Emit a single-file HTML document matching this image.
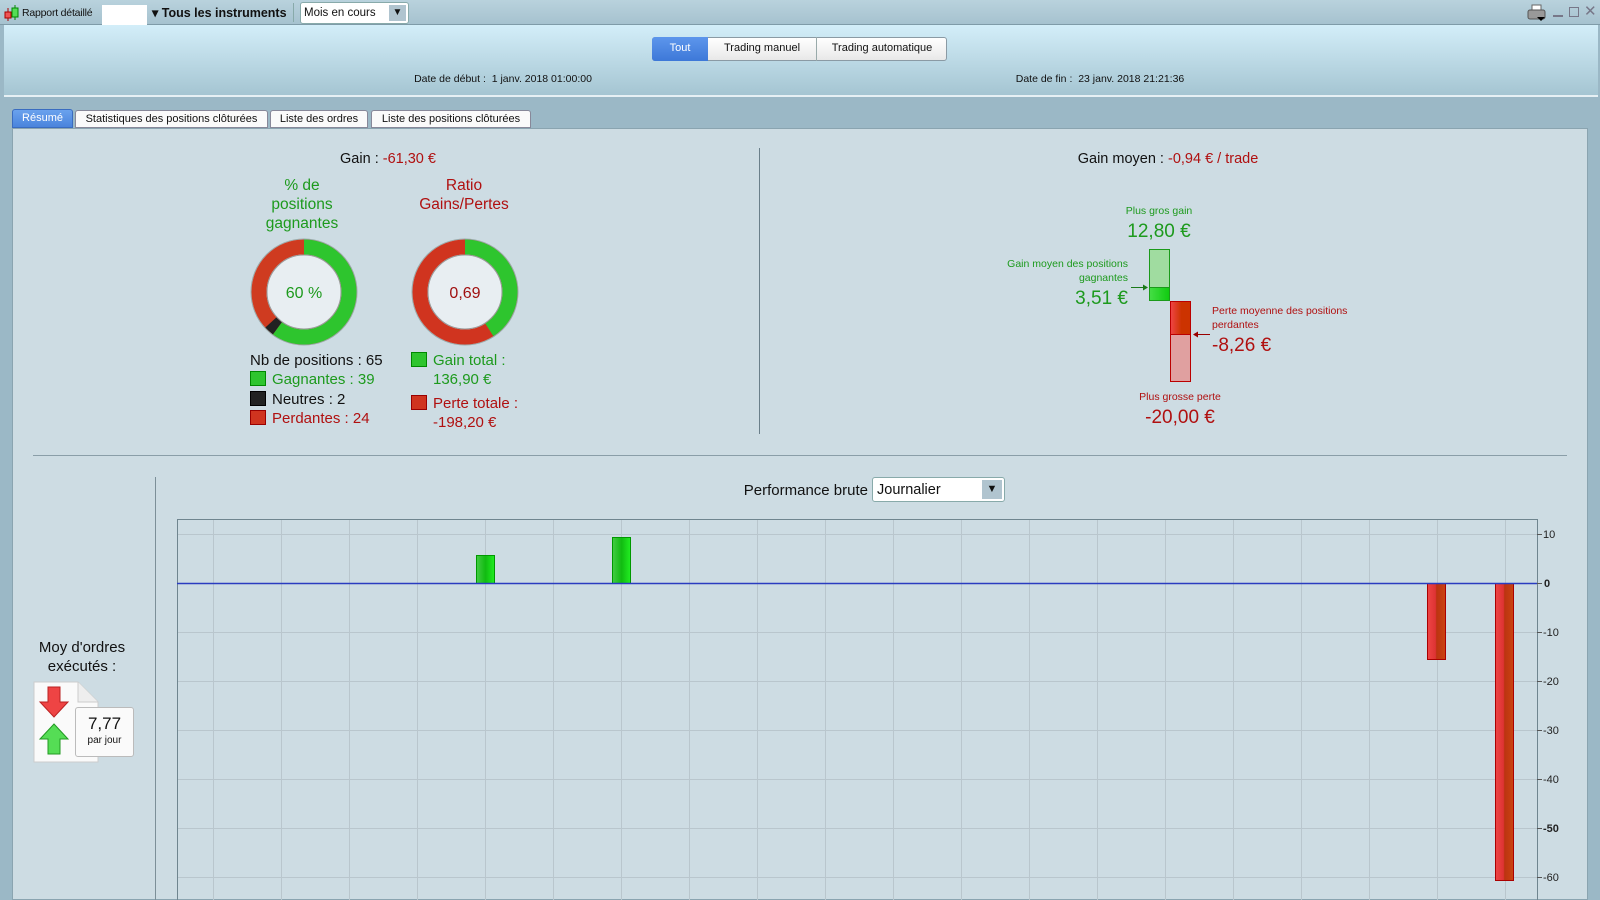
<!DOCTYPE html>
<html><head><meta charset="utf-8">
<style>
*{margin:0;padding:0;box-sizing:border-box}
body{width:1600px;height:900px;overflow:hidden;background:#9bb8c6;font-family:"Liberation Sans",sans-serif;position:relative;color:#111}
.a{position:absolute;white-space:nowrap}
.g{color:#1d9a1d}.r{color:#b01010}
.c{transform:translateX(-50%);text-align:center}
</style></head><body>
<!-- top bar -->
<div class="a" style="left:0;top:0;width:1600px;height:25px;background:linear-gradient(#b9d2dd,#a6c2cf);border-bottom:1px solid #7f9ba8"></div>
<svg class="a" style="left:3px;top:4px" width="18" height="18"><line x1="5" y1="4" x2="5" y2="17" stroke="#a00"/><rect x="2" y="8" width="6" height="6" fill="#e55" stroke="#a00"/><line x1="12" y1="1" x2="12" y2="16" stroke="#080"/><rect x="9" y="4" width="6" height="9" fill="#5d5" stroke="#080"/></svg>
<div class="a" style="left:22px;top:7px;font-size:10.5px;letter-spacing:-0.2px">Rapport détaillé</div>
<div class="a" style="left:102px;top:5px;width:45px;height:21px;background:#fff"></div>
<div class="a" style="left:152px;top:5px;font-size:12.5px;font-weight:bold">▾ Tous les instruments</div>
<div class="a" style="left:293px;top:3px;width:1px;height:19px;background:#8aa"></div>
<div class="a" style="left:300px;top:2px;width:109px;height:22px;background:#fff;border:1px solid #8aa;border-radius:3px;font-size:11.5px;padding:4px 0 0 3px">Mois en cours<div class="a" style="right:2px;top:2px;width:17px;height:16px;background:#b0c4cf;font-size:10px;text-align:center;line-height:16px">▼</div></div>
<svg class="a" style="left:1527px;top:4px" width="22" height="18"><rect x="5" y="1" width="9" height="6" fill="#fff" stroke="#666"/><rect x="1" y="6" width="17" height="9" rx="2" fill="#999" stroke="#555"/><path d="M10 13h8l-4 4z" fill="#000"/></svg>
<div class="a" style="left:1553px;top:15px;width:10px;height:2px;background:#778"></div>
<div class="a" style="left:1569px;top:7px;width:10px;height:10px;border:1.5px solid #778"></div>
<div class="a" style="left:1584px;top:2px;font-size:15px;color:#778">✕</div>
<!-- header -->
<div class="a" style="left:4px;top:25px;width:1594px;height:72px;background:linear-gradient(#d3eef9,#a5c5d2);border-bottom:2px solid #e6f0f4"></div>
<div class="a" style="left:652px;top:37px;width:295px;height:24px;border:1px solid #8a9aa4;border-radius:3px;background:linear-gradient(#fff,#e8e8e8);font-size:11px"></div>
<div class="a" style="left:652px;top:37px;width:56px;height:24px;background:linear-gradient(#5d96ec,#3d78d8);border-radius:3px 0 0 3px;color:#fff;font-size:11px;text-align:center;line-height:23px">Tout</div>
<div class="a" style="left:708px;top:37px;width:109px;height:24px;border-right:1px solid #9aa;font-size:11px;text-align:center;line-height:23px">Trading manuel</div>
<div class="a" style="left:817px;top:37px;width:130px;height:24px;font-size:11px;text-align:center;line-height:23px">Trading automatique</div>
<div class="a c" style="left:503px;top:73px;font-size:10.5px">Date de début :&nbsp; 1 janv. 2018 01:00:00</div>
<div class="a c" style="left:1100px;top:73px;font-size:10.5px">Date de fin :&nbsp; 23 janv. 2018 21:21:36</div>
<!-- tabs -->
<div class="a" style="left:12px;top:109px;width:61px;height:19px;background:linear-gradient(#6aa2ee,#4a84dc);border:1px solid #3a6cc0;border-radius:3px 3px 0 0;color:#fff;font-size:11px;text-align:center;line-height:17px">Résumé</div>
<div class="a" style="left:75px;top:110px;width:193px;height:18px;background:#fafafa;border:1px solid #889;border-radius:3px 3px 0 0;font-size:11px;text-align:center;line-height:16px">Statistiques des positions clôturées</div>
<div class="a" style="left:270px;top:110px;width:98px;height:18px;background:#fafafa;border:1px solid #889;border-radius:3px 3px 0 0;font-size:11px;text-align:center;line-height:16px">Liste des ordres</div>
<div class="a" style="left:371px;top:110px;width:160px;height:18px;background:#fafafa;border:1px solid #889;border-radius:3px 3px 0 0;font-size:11px;text-align:center;line-height:16px">Liste des positions clôturées</div>
<!-- panel -->
<div class="a" style="left:12px;top:128px;width:1576px;height:772px;background:#cddce3;border:1px solid #8aa4b0"></div>
<div class="a c" style="left:388px;top:151px;font-size:14.5px">Gain : <span class="r">-61,30 €</span></div>
<div class="a c g" style="left:302px;top:176px;font-size:15.5px;line-height:19px">% de<br>positions<br>gagnantes</div>
<div class="a c r" style="left:464px;top:176px;font-size:15.5px;line-height:19px">Ratio<br>Gains/Pertes</div>
<svg class="a" style="left:250px;top:238px" width="110" height="110">
<circle cx="54" cy="54" r="53" fill="#dfe6ea" stroke="#9aa" />
<circle cx="54" cy="54" r="45" fill="none" stroke="#cf3b20" stroke-width="15"/>
<circle cx="54" cy="54" r="45" fill="none" stroke="#2ec52e" stroke-width="15" stroke-dasharray="169.6 400" transform="rotate(-90 54 54)"/>
<circle cx="54" cy="54" r="45" fill="none" stroke="#222" stroke-width="15" stroke-dasharray="0 169.6 8.7 400" transform="rotate(-90 54 54)"/>
<circle cx="54" cy="54" r="37" fill="#e8eef2" stroke="#999"/>
<text x="54" y="60" font-size="16" text-anchor="middle" fill="#1d9a1d" font-family="Liberation Sans">60 %</text></svg>
<svg class="a" style="left:411px;top:238px" width="110" height="110">
<circle cx="54" cy="54" r="53" fill="#dfe6ea" stroke="#9aa" />
<circle cx="54" cy="54" r="45" fill="none" stroke="#d0341f" stroke-width="15"/>
<circle cx="54" cy="54" r="45" fill="none" stroke="#2ec52e" stroke-width="15" stroke-dasharray="115.5 400" transform="rotate(-90 54 54)"/>
<circle cx="54" cy="54" r="37" fill="#e8eef2" stroke="#999"/>
<text x="54" y="60" font-size="16" text-anchor="middle" fill="#a01010" font-family="Liberation Sans">0,69</text></svg>
<div class="a" style="left:250px;top:351px;font-size:15px;line-height:19.4px">Nb de positions : 65<br>
<span style="display:inline-block;width:16px;height:15px;background:#2ec52e;border:1px solid #080;vertical-align:-2px;margin-right:6px"></span><span class="g">Gagnantes : 39</span><br>
<span style="display:inline-block;width:16px;height:15px;background:#222;border:1px solid #000;vertical-align:-2px;margin-right:6px"></span>Neutres : 2<br>
<span style="display:inline-block;width:16px;height:15px;background:#d0341f;border:1px solid #900;vertical-align:-2px;margin-right:6px"></span><span class="r">Perdantes : 24</span></div>
<div class="a" style="left:411px;top:352px;width:16px;height:15px;background:#2ec52e;border:1px solid #080"></div>
<div class="a g" style="left:433px;top:351px;font-size:15px;line-height:19.4px">Gain total :<br>136,90 €</div>
<div class="a" style="left:411px;top:395px;width:16px;height:15px;background:#d0341f;border:1px solid #900"></div>
<div class="a r" style="left:433px;top:394px;font-size:15px;line-height:19.4px">Perte totale :<br>-198,20 €</div>
<div class="a" style="left:759px;top:148px;width:1px;height:286px;background:#6a7f8a"></div>
<div class="a c" style="left:1168px;top:151px;font-size:14.5px">Gain moyen : <span class="r">-0,94 € / trade</span></div>
<div class="a c g" style="left:1159px;top:205px;font-size:10.5px">Plus gros gain</div>
<div class="a c g" style="left:1159px;top:221px;font-size:19px">12,80 €</div>
<div class="a g" style="right:472px;top:257px;font-size:10.5px;text-align:right;line-height:14px">Gain moyen des positions<br>gagnantes</div>
<div class="a g" style="right:472px;top:288px;font-size:19px">3,51 €</div>
<div class="a" style="left:1149px;top:249px;width:21px;height:52px;background:#a0dca0;border:1px solid #1a9a1a"></div>
<div class="a" style="left:1149px;top:287px;width:21px;height:14px;background:linear-gradient(90deg,#4d4,#1c1);border:1px solid #1a9a1a"></div>
<svg class="a" style="left:1131px;top:283px" width="18" height="9"><line x1="0" y1="4.5" x2="15" y2="4.5" stroke="#1a7a1a"/><path d="M17 4.5l-5-3v6z" fill="#1a7a1a"/></svg>
<div class="a" style="left:1170px;top:301px;width:21px;height:81px;background:#e0a0a0;border:1px solid #b00"></div>
<div class="a" style="left:1170px;top:301px;width:21px;height:34px;background:linear-gradient(90deg,#e44,#c30 55%);border:1px solid #b00"></div>
<svg class="a" style="left:1192px;top:330px" width="18" height="9"><line x1="3" y1="4.5" x2="18" y2="4.5" stroke="#900"/><path d="M1 4.5l5-3v6z" fill="#900"/></svg>
<div class="a r" style="left:1212px;top:304px;font-size:10.5px;line-height:14px">Perte moyenne des positions<br>perdantes</div>
<div class="a r" style="left:1212px;top:335px;font-size:19px">-8,26 €</div>
<div class="a c r" style="left:1180px;top:391px;font-size:10.5px">Plus grosse perte</div>
<div class="a c r" style="left:1180px;top:407px;font-size:19px">-20,00 €</div>
<div class="a" style="left:33px;top:455px;width:1534px;height:1px;background:#8a9ea8"></div>
<!-- left stats -->
<div class="a" style="left:155px;top:477px;width:1px;height:423px;background:#7c8f98"></div>
<div class="a c" style="left:82px;top:638px;font-size:15px;line-height:19px">Moy d'ordres<br>exécutés :</div>
<svg class="a" style="left:33px;top:681px" width="105" height="82"><path d="M1 1h44l20 20v60h-64z" fill="#fafafa" stroke="#ccc"/><path d="M45 1v20h20" fill="#eee" stroke="#ccc"/>
<path d="M15 6h12v15h8l-14 15l-14-15h8z" fill="#e44" stroke="#b22"/><path d="M21 43l14 15h-8v15h-12v-15h-8z" fill="#5d5" stroke="#292"/></svg>
<div class="a" style="left:75px;top:707px;width:59px;height:50px;background:#fafafa;border:1px solid #bbb;border-radius:3px;text-align:center"><div style="font-size:17px;margin-top:6px">7,77</div><div style="font-size:10px;margin-top:1px">par jour</div></div>
<div class="a" style="right:732px;top:482px;font-size:15px">Performance brute</div>
<div class="a" style="left:872px;top:477px;width:133px;height:25px;background:#fff;border:1px solid #8aa;border-radius:3px;font-size:14.5px;padding:4px 0 0 4px">Journalier<div class="a" style="right:2px;top:2px;width:20px;height:19px;background:#b0c4cf;font-size:11px;text-align:center;line-height:19px">▼</div></div>
<!-- chart -->
<svg class="a" style="left:0;top:0" width="1600" height="900" font-family="Liberation Sans" font-size="11">
<g stroke="#b9c6cd" stroke-width="1">
<line x1="177" y1="534.5" x2="1537" y2="534.5"/><line x1="177" y1="632.5" x2="1537" y2="632.5"/><line x1="177" y1="681.5" x2="1537" y2="681.5"/><line x1="177" y1="730.5" x2="1537" y2="730.5"/><line x1="177" y1="779.5" x2="1537" y2="779.5"/><line x1="177" y1="828.5" x2="1537" y2="828.5"/><line x1="177" y1="877.5" x2="1537" y2="877.5"/>
<line x1="213.5" y1="519" x2="213.5" y2="900"/><line x1="281.5" y1="519" x2="281.5" y2="900"/><line x1="349.5" y1="519" x2="349.5" y2="900"/><line x1="417.5" y1="519" x2="417.5" y2="900"/><line x1="485.5" y1="519" x2="485.5" y2="900"/><line x1="553.5" y1="519" x2="553.5" y2="900"/><line x1="621.5" y1="519" x2="621.5" y2="900"/><line x1="689.5" y1="519" x2="689.5" y2="900"/><line x1="757.5" y1="519" x2="757.5" y2="900"/><line x1="825.5" y1="519" x2="825.5" y2="900"/><line x1="893.5" y1="519" x2="893.5" y2="900"/><line x1="961.5" y1="519" x2="961.5" y2="900"/><line x1="1029.5" y1="519" x2="1029.5" y2="900"/><line x1="1097.5" y1="519" x2="1097.5" y2="900"/><line x1="1165.5" y1="519" x2="1165.5" y2="900"/><line x1="1233.5" y1="519" x2="1233.5" y2="900"/><line x1="1301.5" y1="519" x2="1301.5" y2="900"/><line x1="1369.5" y1="519" x2="1369.5" y2="900"/><line x1="1437.5" y1="519" x2="1437.5" y2="900"/><line x1="1505.5" y1="519" x2="1505.5" y2="900"/>
</g>
<rect x="177.5" y="519.5" width="1360" height="400" fill="none" stroke="#6f858f"/>
<defs><linearGradient id="gg" x1="0" x2="1"><stop offset="0" stop-color="#4c4"/><stop offset="0.5" stop-color="#1b1"/><stop offset="1" stop-color="#2e2"/></linearGradient>
<linearGradient id="rg" x1="0" x2="1"><stop offset="0" stop-color="#e44"/><stop offset="0.45" stop-color="#d33"/><stop offset="0.5" stop-color="#b31"/><stop offset="1" stop-color="#c41"/></linearGradient></defs>
<rect x="476.5" y="555.5" width="18" height="28" fill="url(#gg)" stroke="#090"/>
<rect x="612.5" y="537.5" width="18" height="46" fill="url(#gg)" stroke="#090"/>
<rect x="1427.5" y="583.5" width="18" height="76" fill="url(#rg)" stroke="#a00"/>
<rect x="1495.5" y="583.5" width="18" height="297" fill="url(#rg)" stroke="#a00"/>
<line x1="177" y1="583.5" x2="1537" y2="583.5" stroke="#2a3cc0" stroke-width="1.5"/>
<g stroke="#555"><line x1="1537" y1="534.5" x2="1542" y2="534.5"/><line x1="1537" y1="583.5" x2="1542" y2="583.5"/><line x1="1537" y1="632.5" x2="1542" y2="632.5"/><line x1="1537" y1="681.5" x2="1542" y2="681.5"/><line x1="1537" y1="730.5" x2="1542" y2="730.5"/><line x1="1537" y1="779.5" x2="1542" y2="779.5"/><line x1="1537" y1="828.5" x2="1542" y2="828.5"/><line x1="1537" y1="877.5" x2="1542" y2="877.5"/></g>
<g fill="#222"><text x="1543" y="538">10</text><text x="1544" y="587" font-weight="bold">0</text><text x="1543" y="636">-10</text><text x="1543" y="685">-20</text><text x="1543" y="734">-30</text><text x="1543" y="783">-40</text><text x="1543" y="832" font-weight="bold">-50</text><text x="1543" y="881">-60</text></g>
</svg>
</body></html>
